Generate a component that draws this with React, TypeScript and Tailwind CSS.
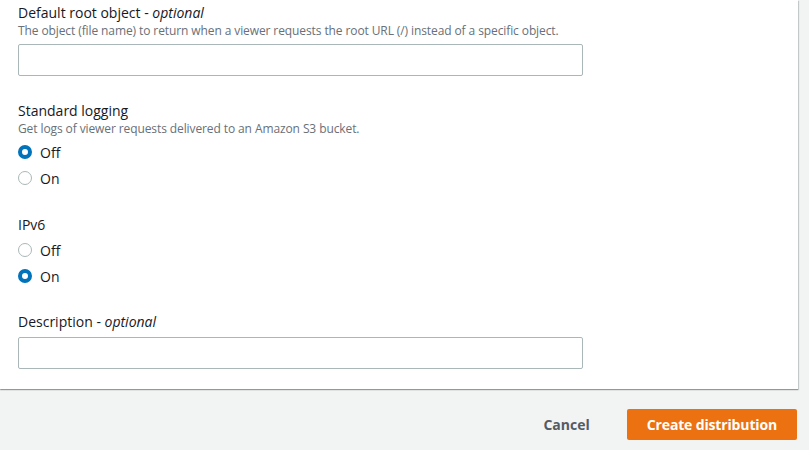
import React, { useState } from 'react';

const Radio: React.FC<{ label: string; checked: boolean; onClick: () => void }> = ({ label, checked, onClick }) => (
  <div className="flex items-center h-5 cursor-pointer" onClick={onClick}>
    {checked ? (
      <span className="w-[14px] h-[14px] rounded-full border-[4px] border-[#0073bb] bg-white box-border" />
    ) : (
      <span className="w-[14px] h-[14px] rounded-full border border-[#aab7b8] bg-white box-border" />
    )}
    <span className="ml-2 text-[14px] text-[#16191f]">{label}</span>
  </div>
);

export default function App() {
  const [logging, setLogging] = useState('off');
  const [ipv6, setIpv6] = useState('on');

  return (
    <div className="min-h-[450px] bg-[#f2f3f3] font-['Open_Sans',sans-serif]">
      <div className="w-[798px] bg-white pl-[18px] pt-[3px] pb-[20px] shadow-[0_1px_1px_0_rgba(0,28,36,0.3),1px_1px_1px_0_rgba(0,28,36,0.15)]">
        <div className="text-[14px] leading-5 text-[#16191f]">
          Default root object - <i>optional</i>
        </div>
        <div className="text-[12px] leading-4 tracking-[-0.1px] text-[#687078]">
          The object (file name) to return when a viewer requests the root URL (/) instead of a specific object.
        </div>
        <input className="mt-[5px] block w-[565px] h-[32px] border border-[#aab7b8] rounded-[2px] px-2 text-[14px] outline-none" />

        <div className="mt-[25px] text-[14px] leading-5 text-[#16191f]">Standard logging</div>
        <div className="text-[12px] leading-4 tracking-[-0.1px] text-[#687078]">Get logs of viewer requests delivered to an Amazon S3 bucket.</div>
        <div className="mt-[5px] flex flex-col gap-[6px]">
          <Radio label="Off" checked={logging === 'off'} onClick={() => setLogging('off')} />
          <Radio label="On" checked={logging === 'on'} onClick={() => setLogging('on')} />
        </div>

        <div className="mt-[27px] text-[14px] leading-5 text-[#16191f]">IPv6</div>
        <div className="mt-[5px] flex flex-col gap-[6px]">
          <Radio label="Off" checked={ipv6 === 'off'} onClick={() => setIpv6('off')} />
          <Radio label="On" checked={ipv6 === 'on'} onClick={() => setIpv6('on')} />
        </div>

        <div className="mt-[26px] text-[14px] leading-5 text-[#16191f]">
          Description - <i>optional</i>
        </div>
        <input className="mt-[5px] block w-[565px] h-[32px] border border-[#aab7b8] rounded-[2px] px-2 text-[14px] outline-none" />
      </div>

      <div className="mt-[20px] flex justify-end items-center pr-[12px]">
        <button className="px-5 h-[31px] text-[14px] font-bold text-[#545b64]">Cancel</button>
        <button className="ml-[17px] px-5 h-[31px] rounded-[2px] bg-[#ec7211] text-[14px] font-bold tracking-[-0.15px] text-white">
          Create distribution
        </button>
      </div>
    </div>
  );
}
